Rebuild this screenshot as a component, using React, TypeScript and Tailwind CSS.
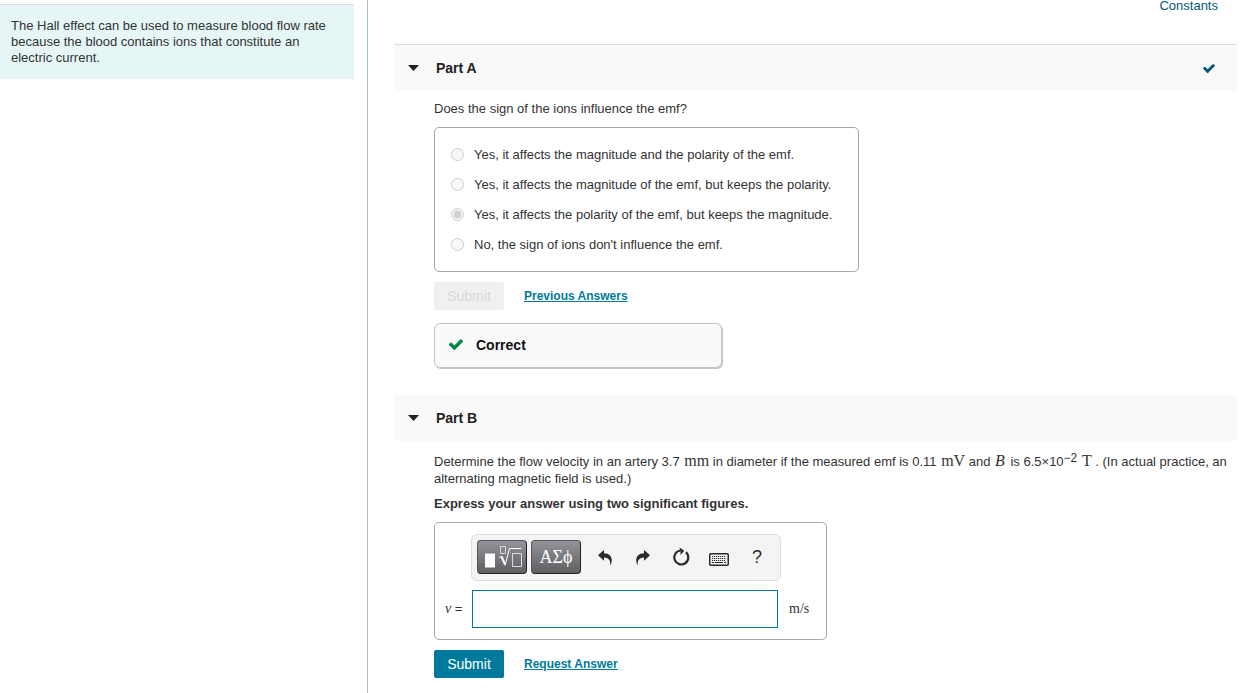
import type { ReactNode } from "react";

const choices = [
  "Yes, it affects the magnitude and the polarity of the emf.",
  "Yes, it affects the magnitude of the emf, but keeps the polarity.",
  "Yes, it affects the polarity of the emf, but keeps the magnitude.",
  "No, the sign of ions don't influence the emf.",
];

const mathFont = "pl-px font-['Liberation_Serif',serif] text-base leading-none";

function CheckIcon({ className }: { className: string }) {
  return (
    <svg viewBox="121 322 1550 1188" className={className} fill="currentColor" aria-hidden="true">
      <path d="M1671 566q0 40-28 68l-724 724-136 136q-28 28-68 28t-68-28l-136-136-362-362q-28-28-28-68t28-68l136-136q28-28 68-28t68 28l294 295 656-657q28-28 68-28t68 28l136 136q28 28 28 68z" />
    </svg>
  );
}

function TemplateIcon() {
  return (
    <svg viewBox="0 0 40 24" className="h-6 w-10" fill="none" stroke="white" aria-hidden="true">
      <path d="M3 8.500h10v14H3z" fill="white" stroke="none" />
      <path d="M18.500 1.500h5v7h-5zM30.500 8.500h9v13h-9z" stroke="#ddd" />
      <path d="M17 12.500l2.500-1" />
      <path d="M19.500 11.500l3.500 8" strokeWidth="2" />
      <path d="M23 20.500l4.500-17h12" />
    </svg>
  );
}

function UndoIcon({ className = "" }: { className?: string }) {
  return (
    <svg viewBox="0 0 14 15" className={`h-[15px] w-3.5 ${className}`} fill="currentColor" aria-hidden="true">
      <path d="M0 5.300 6 0V3.200C11 3.300 13.800 6 13.800 10.200 13.800 12 13.400 13.500 12.600 14.800 12.300 14.800 12.100 14.700 12.200 14.400 12.700 10.400 10.500 7.800 6 7.600V10.800Z" />
    </svg>
  );
}

function ResetIcon() {
  return (
    <svg viewBox="0 0 18 20" className="h-5 w-[18px]" fill="none" aria-hidden="true">
      <path d="M13.900 5.200A7 7 0 1 1 8.500 3.500" stroke="currentColor" strokeWidth="2.200" />
      <path d="M7.500 0.500 12.300 3.800 8.500 8V4.700Z" fill="currentColor" />
    </svg>
  );
}

function KeyboardIcon() {
  return (
    <svg viewBox="0 0 20 13" className="mt-1 h-[13px] w-5" fill="none" stroke="currentColor" aria-hidden="true">
      <rect x="0.750" y="0.750" width="18.500" height="11.500" rx="1" strokeWidth="1.500" />
      <path d="M3 3.500h14M3 5.500h14M3 7.500h14" strokeDasharray="1.200 0.800" />
      <path d="M3 9.500h2M6 9.500h8M15 9.500h2" />
    </svg>
  );
}

function PartHeader({ title, className, children }: { title: string; className: string; children?: ReactNode }) {
  return (
    <header className={`flex items-center justify-between bg-[#f9f9f9] pr-[22px] pl-3.5 ${className}`}>
      <button type="button" className="flex items-center gap-[17px] text-sm font-bold text-[#222]">
        <svg viewBox="0 0 11 6" className="h-1.5 w-[11px]" fill="currentColor" aria-hidden="true">
          <path d="M0 0h11L5.500 6z" />
        </svg>
        <h2>{title}</h2>
      </button>
      {children}
    </header>
  );
}

function SymbolButton({ label, children }: { label: string; children: ReactNode }) {
  return (
    <button
      type="button"
      aria-label={label}
      className="flex h-[34px] w-[50px] shrink-0 items-center justify-center rounded border border-t-[#555] border-r-[#222] border-b-[#222] border-l-[#555] bg-linear-to-b from-[#94939b] to-[#5f5f62] text-white"
    >
      {children}
    </button>
  );
}

function ToolButton({ label, children }: { label: string; children: ReactNode }) {
  return (
    <button type="button" aria-label={label} className="flex h-[34px] w-[38px] items-center justify-center text-[#2b2b2b]">
      {children}
    </button>
  );
}

function PartA() {
  return (
    <section>
      <PartHeader title="Part A" className="h-[47px] border-t border-[#ddd]">
        <CheckIcon className="h-[9px] w-3 text-[#005a78]" />
      </PartHeader>
      <div className="flex flex-col items-start pt-2.5 pl-10">
        <p>Does the sign of the ions influence the emf?</p>
        <fieldset className="mt-2.5 w-full max-w-[425px] rounded-[5px] border border-[#a6a6a6] px-4 pt-[11px] pb-3">
          {choices.map((choice, i) => (
            <label key={choice} className="flex h-[30px] items-center gap-2.5">
              <input type="radio" name="part-a" defaultChecked={i === 2} disabled className="size-[13px]" />
              <span className="pt-0.5">{choice}</span>
            </label>
          ))}
        </fieldset>
        <div className="mt-2.5 flex items-center gap-5">
          <button type="button" disabled className="h-7 w-[70px] rounded-xs bg-[#f0f0f0] text-sm text-[#d9d9d9]">
            Submit
          </button>
          <a href="#previous" className="text-xs font-bold text-[#007a9c] underline">
            Previous Answers
          </a>
        </div>
        <div className="mt-[13px] flex h-[45px] w-full max-w-72 items-center gap-[13px] rounded-md border border-[#c5c5c5] bg-[#f9f9f9] px-3.5 pb-0.5 text-sm font-bold text-[#111] shadow-[1px_1px_0_#c5c5c5]">
          <CheckIcon className="h-[11px] w-3.5 text-[#008542]" />
          Correct
        </div>
      </div>
    </section>
  );
}

function PartB() {
  return (
    <section className="mt-[27px]">
      <PartHeader title="Part B" className="h-[46px]" />
      <div className="flex flex-col items-start pt-3 pl-10">
        <p className="leading-[17px]">
          Determine the flow velocity in an artery 3.7 <span className={mathFont}>mm</span> in diameter if the measured
          emf is 0.11 <span className={mathFont}>mV</span> and <i className={`pr-0.5 ${mathFont}`}>B</i> is 6.5×10
          <sup className="-top-1 text-xs leading-none">−2</sup> <span className={mathFont}>T</span> . (In actual
          practice, an alternating magnetic field is used.)
        </p>
        <p className="mt-[9px] font-bold">Express your answer using two significant figures.</p>
        <div className="mt-2.5 w-full max-w-[393px] rounded-[5px] border border-[#a6a6a6] pt-[11px] pr-[15px] pb-[11px] pl-2.5">
          <div className="ml-[26px] flex h-[47px] w-[310px] items-center gap-1 rounded-md border border-[#ddd] bg-[#f4f4f4] pb-px pl-[5px]">
            <SymbolButton label="Templates">
              <TemplateIcon />
            </SymbolButton>
            <SymbolButton label="Symbols">
              <span className="font-['Liberation_Serif',serif] text-lg">ΑΣϕ</span>
            </SymbolButton>
            <div className="ml-px flex">
              <ToolButton label="Undo">
                <UndoIcon />
              </ToolButton>
              <ToolButton label="Redo">
                <UndoIcon className="-scale-x-100" />
              </ToolButton>
              <ToolButton label="Reset">
                <ResetIcon />
              </ToolButton>
              <ToolButton label="Keyboard shortcuts">
                <KeyboardIcon />
              </ToolButton>
              <ToolButton label="Help">
                <span className="text-lg">?</span>
              </ToolButton>
            </div>
          </div>
          <div className="mt-[9px] flex items-center">
            <label htmlFor="velocity" className="w-[27px] text-[13px]">
              <i className="font-['Liberation_Serif',serif] text-sm leading-none">v</i> =
            </label>
            <input id="velocity" type="text" className="h-[38px] min-w-0 flex-1 border border-[#007a9c] bg-white px-2 outline-none" />
            <span className="w-[33px] pl-[11px] font-['Liberation_Serif',serif] text-sm whitespace-nowrap">m/s</span>
          </div>
        </div>
        <div className="mt-2.5 flex items-center gap-5">
          <button type="button" className="h-7 w-[70px] rounded-xs bg-[#007a9c] text-sm text-white">
            Submit
          </button>
          <a href="#request" className="text-xs font-bold text-[#007a9c] underline">
            Request Answer
          </a>
        </div>
      </div>
    </section>
  );
}

export default function App() {
  return (
    <div className="flex min-h-screen bg-white font-['Liberation_Sans',Arial,sans-serif] text-[13px] leading-4 text-[#333]">
      <aside className="w-[368px] shrink-0 border-r border-[#b4c0d0] pt-1 pr-[13px]">
        <p className="border-t border-[#ddd] bg-[#e6f6f7] pt-[13px] pr-5 pb-[13px] pl-[11px]">
          The Hall effect can be used to measure blood flow rate because the blood contains ions that constitute an
          electric current.
        </p>
      </aside>
      <main className="min-w-0 flex-1 pr-1.5 pb-3.5 pl-[26px]">
        <div className="flex justify-end pr-[19px] pb-8 leading-3">
          <a href="#constants" className="text-[#005a78]">
            Constants
          </a>
        </div>
        <PartA />
        <PartB />
      </main>
    </div>
  );
}
